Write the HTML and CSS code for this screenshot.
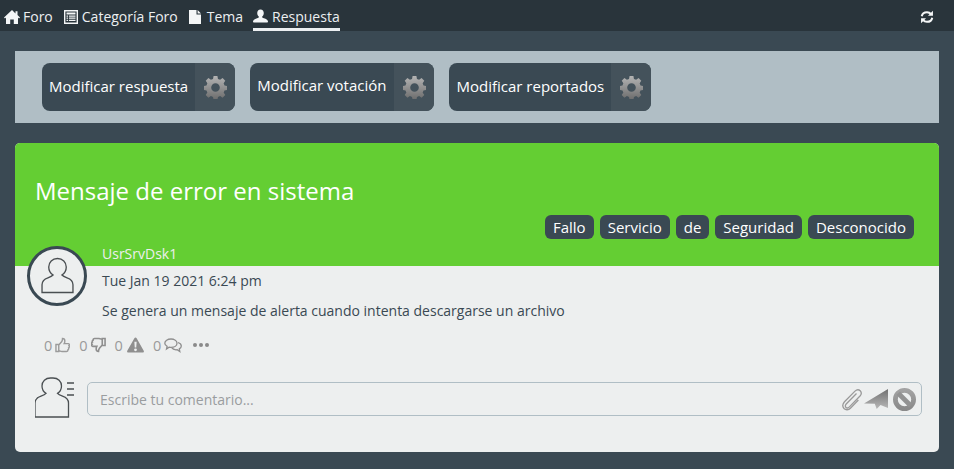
FILE: index.html
```html
<!DOCTYPE html>
<html lang="es">
<head>
<meta charset="utf-8">
<title>Respuesta</title>
<link rel="stylesheet" href="styles.css">
</head>
<body>
<svg class="defs" width="0" height="0" aria-hidden="true">
  <defs>
    <linearGradient id="grey" x1="0" y1="0" x2="0" y2="1">
      <stop offset="0" stop-color="#b4b4b4"/>
      <stop offset="1" stop-color="#6c6c6c"/>
    </linearGradient>
    <linearGradient id="send" x1="0" y1="0" x2="0" y2="1">
      <stop offset="0" stop-color="#707070"/>
      <stop offset="1" stop-color="#b8b8b8"/>
    </linearGradient>
    <linearGradient id="block" x1="0" y1="0" x2="0" y2="1">
      <stop offset="0" stop-color="#a2a2a2"/>
      <stop offset="1" stop-color="#8a8a8a"/>
    </linearGradient>
    <symbol id="gear" viewBox="0 0 24 24">
      <path fill="url(#grey)" fill-rule="evenodd" d="M10 0h4l.6 3 2.200.9 2.600-1.700 2.800 2.800-1.700 2.600.9 2.200 3 .6v4l-3 .6-.9 2.200 1.700 2.600-2.800 2.800-2.600-1.700-2.200.9-.6 3h-4l-.6-3-2.200-.9-2.600 1.700-2.800-2.800 1.700-2.600-.9-2.200-3-.6v-4l3-.6.9-2.200-1.700-2.600 2.800-2.800 2.600 1.700 2.200-.9zM12 7.500a4.500 4.500 0 1 0 0 9 4.500 4.500 0 0 0 0-9z"/>
    </symbol>
  </defs>
</svg>

<nav class="topbar">
  <a class="crumb crumb-home">
    <svg class="crumb-icon" viewBox="0 0 16 14"><path fill="#f4f6f7" d="M8 0 0 7.400l1 1.100 1-.9V14h4.200V9.400h3.600V14H14V7.600l1 .9 1-1.100-2.500-2.300V1.200h-2v2.300z"/></svg>
    Foro
  </a>
  <a class="crumb crumb-list">
    <svg class="crumb-icon crumb-icon-list" viewBox="0 0 14 14"><path fill="none" stroke="#f4f6f7" stroke-width="1.400" d="M.7.7h12.600v12.600H.7z"/><path fill="#f4f6f7" d="M2.500 2.500h9v2h-9zM2.500 5.500h1.600v1.200H2.500zM5 5.500h6.500v1.200H5zM2.500 7.600h1.600v1.200H2.500zM5 7.600h6.500v1.200H5zM2.500 9.800h1.600V11H2.500zM5 9.800h6.500V11H5z"/></svg>
    Categoría Foro
  </a>
  <a class="crumb">
    <svg class="crumb-icon crumb-icon-doc" viewBox="0 0 12 14"><path fill="#f4f6f7" d="M0 0h7.500v4.500H12V14H0zM8.600 0 12 3.400H8.600z"/></svg>
    Tema
  </a>
  <a class="crumb crumb-active">
    <svg class="crumb-icon crumb-icon-user" viewBox="0 0 16 14"><path fill="#f4f6f7" d="M8 0c2.200 0 3.500 1.600 3.500 3.800 0 1.700-.8 3.200-1.800 4 .1.800.6 1.200 2 1.700 2.400.8 3.900 1.600 4.300 3.300.1.500-.2 1.200-.8 1.200H.8c-.6 0-.9-.7-.8-1.200.4-1.700 1.900-2.500 4.300-3.300 1.400-.5 1.900-.9 2-1.700-1-.8-1.800-2.300-1.800-4C4.500 1.600 5.800 0 8 0z"/></svg>
    Respuesta
  </a>
  <svg class="refresh" viewBox="0 0 16 16"><path fill="none" stroke="#f4f6f7" stroke-width="2.300" d="M2 7.200C2.500 4.400 4.900 2.500 8 2.500c1.900 0 3.500.8 4.600 2.200M14 8.800c-.5 2.800-2.900 4.700-6 4.700-1.900 0-3.500-.8-4.600-2.200"/><path fill="#f4f6f7" d="M14.800.8v5.700H9.100zM1.200 15.200V9.500h5.700z"/></svg>
</nav>

<main class="page">
  <section class="actions">
    <a class="action"><span class="action-label">Modificar respuesta</span><span class="action-icon"><svg class="gear"><use href="#gear"/></svg></span></a>
    <a class="action"><span class="action-label action-label-up">Modificar votación</span><span class="action-icon"><svg class="gear"><use href="#gear"/></svg></span></a>
    <a class="action"><span class="action-label">Modificar reportados</span><span class="action-icon"><svg class="gear"><use href="#gear"/></svg></span></a>
  </section>

  <article class="card">
    <header class="card-head">
      <h1 class="card-title">Mensaje de error en sistema</h1>
      <div class="tags">
        <span class="tag">Fallo</span>
        <span class="tag">Servicio</span>
        <span class="tag">de</span>
        <span class="tag">Seguridad</span>
        <span class="tag">Desconocido</span>
      </div>
    </header>

    <div class="post">
      <div class="avatar">
        <svg viewBox="0 0 32 36" class="avatar-figure"><path fill="none" stroke="#4a4f52" stroke-width="1.300" d="M16 1c5 0 8.500 3.600 8.500 8.300 0 3.400-1.800 6.200-4.200 7.700 1 1.200 2.400 1.900 5 2.800 3.700 1.300 5.700 3.400 5.700 6.700V34H1v-7.500c0-3.300 2-5.400 5.700-6.700 2.600-.9 4-1.600 5-2.800-2.400-1.500-4.200-4.300-4.200-7.700C7.500 4.600 11 1 16 1z"/></svg>
      </div>
      <div class="post-body">
        <div class="post-user">UsrSrvDsk1</div>
        <div class="post-date">Tue Jan 19 2021 6:24 pm</div>
        <p class="post-text">Se genera un mensaje de alerta cuando intenta descargarse un archivo</p>
      </div>
    </div>

    <div class="stats">
      <span class="stat">0
        <svg class="stat-icon" viewBox="0 0 16 16"><path fill="none" stroke="#9b9b9b" stroke-width="1.500" d="M1 7.500h3v7.500H1zM4 8l3-3.500c.8-1 1-2 1-3.500 1.800 0 2.500 1.200 2.500 2.800 0 1-.3 2-.7 2.700h4.300c1.200 0 1.700 1.600.8 2.200.7.700.5 2-.4 2.400.4.900 0 1.800-.8 2.100.2 1-.5 1.700-1.500 1.700H7.500c-1.400 0-2.300-.6-3.500-1"/></svg>
      </span>
      <span class="stat">0
        <svg class="stat-icon" viewBox="0 0 16 16"><path fill="none" stroke="#8f8f8f" stroke-width="1.700" d="M15 1h-3v7.500h3zM12 8l-3 3.500c-.8 1-1 2-1 3.500-1.800 0-2.500-1.200-2.500-2.800 0-1 .3-2 .7-2.700H1.900C.7 9.500.2 7.900 1.100 7.300.4 6.600.6 5.300 1.500 4.900 1.100 4 1.500 3.100 2.300 2.800 2.100 1.800 2.800 1.100 3.800 1.100h4.700c1.400 0 2.300.6 3.500 1"/></svg>
      </span>
      <span class="stat">0
        <svg class="stat-icon stat-icon-warn" viewBox="0 0 18 16"><path fill="#8f8f8f" fill-rule="evenodd" d="M9 0c.5 0 .9.3 1.200.8l7.500 13.400c.5.900 0 1.800-1 1.800H1.300c-1 0-1.500-.9-1-1.800L7.800.8C8.100.3 8.500 0 9 0zM7.800 4.500l.4 6.200h1.600l.4-6.200zM9 11.600a1.500 1.500 0 1 0 0 3 1.500 1.500 0 0 0 0-3z"/></svg>
      </span>
      <span class="stat">0
        <svg class="stat-icon stat-icon-chat" viewBox="0 0 18 15"><path fill="none" stroke="#8f8f8f" stroke-width="1.300" d="M7 1c3.300 0 6 1.800 6 4.200S10.300 9.400 7 9.400c-.7 0-1.300-.1-1.900-.2L2.500 11l.6-2.700C1.600 7.500.8 6.400.8 5.200.8 2.800 3.600 1 7 1zM14 4.500c1.900.6 3.300 1.900 3.300 3.500 0 1.200-.8 2.200-2 2.900l.5 2.600-2.600-1.800c-2.300.3-4.500-.4-5.500-2"/></svg>
      </span>
      <span class="dots"><i></i><i></i><i></i></span>
    </div>

    <div class="comment">
      <svg class="comment-user" viewBox="0 0 39 41"><path fill="none" stroke="#4a4f52" stroke-width="1.300" d="M19 1c5 0 8.500 3.300 8.500 8 0 3.200-1.700 6-4 7.400 1 1.200 2.500 1.900 5 2.800 4 1.400 6 3.400 6 6.800V40H1V26c0-3.400 2-5.400 6-6.800 2.500-.9 4-1.600 5-2.800-2.300-1.400-4-4.200-4-7.400 0-4.700 3.500-8 8.500-8z" transform="translate(-1 0)"/><path stroke="#4a4f52" stroke-width="1.300" d="M32 6h7M32 12h7M32 18h7"/></svg>
      <div class="comment-box">
        <span class="placeholder">Escribe tu comentario...</span>
        <span class="comment-tools">
          <svg class="tool-clip" viewBox="0 0 20 23"><path fill="none" stroke="#9a9a9a" stroke-width="1.300" d="M14.500 5.500 4.200 16c-1.300 1.400-1 2.800-.2 3.500.9.800 2.200.6 3.400-.6L18 8c1.500-1.700 1.500-3.900.2-5.300-1.300-1.300-3.500-1.300-5.200.4L2.500 13.800C.5 16 .5 18.800 2 20.500c1.700 1.800 4.500 1.600 6.400-.3l8-8.200"/></svg>
          <svg class="tool-send" viewBox="0 0 24 20"><path fill="url(#send)" d="M24 0v19l-7.500-3-3.800 4-1.900-5.300L0 14.500z"/></svg>
          <svg class="tool-block" viewBox="0 0 24 24"><circle cx="12" cy="12" r="9.500" fill="none" stroke="url(#block)" stroke-width="5"/><path stroke="#929292" stroke-width="5" d="m5.500 5.500 13 13"/></svg>
        </span>
      </div>
    </div>
  </article>
</main>
</body>
</html>
```
FILE: styles.css
```css
* { box-sizing: border-box; }
html, body { margin: 0; height: 100%; }
body {
  background: #3a4953;
  color: #3a4953;
  font-family: "Open Sans", sans-serif;
  font-size: 14px;
  overflow: hidden;
}
.defs { position: absolute; }

.topbar {
  display: flex;
  align-items: flex-start;
  height: 31px;
  background: #29343b;
  padding-left: 4px;
  color: #eceff1;
}
.crumb {
  display: flex;
  align-items: center;
  gap: 2px;
  height: 31px;
  margin-right: 11px;
  padding-top: 2px;
  font-size: 14px;
  line-height: 19px;
  color: #eceff1;
}
.crumb-home { gap: 3px; }
.crumb-active {
  border-bottom: 3px solid #eceff1;
  padding-top: 4px;
  margin-left: -1px;
  gap: 4px;
}
.crumb-list { gap: 4px; }
.crumb-icon { width: 16px; height: 14px; flex: none; }
.crumb-icon-list { width: 14px; }
.crumb-icon-doc { width: 12px; margin-right: 4px; }
.crumb-icon-user { width: 15px; }
.refresh { width: 14px; height: 14px; margin: 10px 20px 0 auto; }

.page { padding: 20px 15px 0; }

.actions {
  display: flex;
  gap: 15px;
  height: 72px;
  padding: 12px 27px;
  background: #b0bec5;
}
.action {
  display: flex;
  height: 48px;
  border-radius: 8px;
  overflow: hidden;
  background: #3a4953;
  color: #fff;
  font-size: 15px;
}
.action-label {
  display: flex;
  align-items: center;
  padding: 0 7px 2px 7px;
}
.action-label-up { padding: 0 8px 4px 7px; }
.action-icon {
  display: flex;
  align-items: center;
  justify-content: center;
  width: 40px;
  background: #44525b;
}
.gear { width: 23px; height: 23px; }

.card {
  height: 309px;
  margin-top: 20px;
  background: #edefef;
  border-radius: 5px;
  overflow: hidden;
}
.card-head {
  height: 123px;
  padding: 33px 25px 0 20px;
  background: #64ce33;
}
.card-title {
  margin: 0;
  font-size: 24px;
  font-weight: 400;
  line-height: 30px;
  color: #fff;
}
.tags {
  display: flex;
  justify-content: flex-end;
  gap: 6px;
  margin-top: 9px;
}
.tag {
  height: 24px;
  padding: 0 8px;
  border-radius: 6px;
  background: #3a4953;
  color: #fff;
  font-size: 15px;
  line-height: 24px;
}

.post {
  display: flex;
  gap: 15px;
  margin-top: -20px;
  padding-left: 12px;
}
.avatar {
  display: flex;
  align-items: center;
  justify-content: center;
  width: 60px;
  height: 60px;
  flex: none;
  border: 3px solid #3a4953;
  border-radius: 50%;
  background: #edefef;
}
.avatar-figure { width: 33px; height: 38px; margin-top: -1px; }
.post-user {
  margin-top: -2px;
  line-height: 20px;
  font-size: 14px;
  color: #edefef;
}
.post-date {
  margin-top: 7px;
  line-height: 20px;
  font-size: 14px;
}
.post-text {
  margin: 10px 0 0;
  line-height: 20px;
  font-size: 14px;
}

.stats {
  display: flex;
  align-items: center;
  gap: 9px;
  height: 20px;
  margin-top: 14px;
  padding-left: 29px;
  color: #9a9a9a;
  font-size: 14.500px;
}
.stat { display: flex; align-items: center; gap: 3px; }
.stat-icon { width: 15px; height: 16px; }
.stat-icon-warn { width: 17px; height: 16px; margin-left: 1px; }
.stat-icon-chat { width: 18px; height: 15px; }
.dots { display: flex; gap: 2px; margin-left: 2px; }
.dots i {
  width: 4px;
  height: 4px;
  border-radius: 50%;
  background: #8a8a8a;
}

.comment {
  display: flex;
  align-items: center;
  gap: 13px;
  margin-top: 25px;
  padding: 0 17px 0 20px;
}
.comment-user { width: 39px; height: 41px; flex: none; margin-top: -3px; }
.comment-box {
  display: flex;
  align-items: center;
  justify-content: space-between;
  flex: 1;
  height: 34px;
  padding: 0 5px 0 12px;
  border: 1px solid #b0bec5;
  border-radius: 5px;
  color: #9a9d9f;
  font-size: 14px;
}
.comment-tools { display: flex; align-items: center; gap: 2px; }
.tool-clip { width: 20px; height: 23px; }
.tool-send { width: 24px; height: 20px; }
.tool-block { width: 23px; height: 23px; margin-left: 3px; }
```
